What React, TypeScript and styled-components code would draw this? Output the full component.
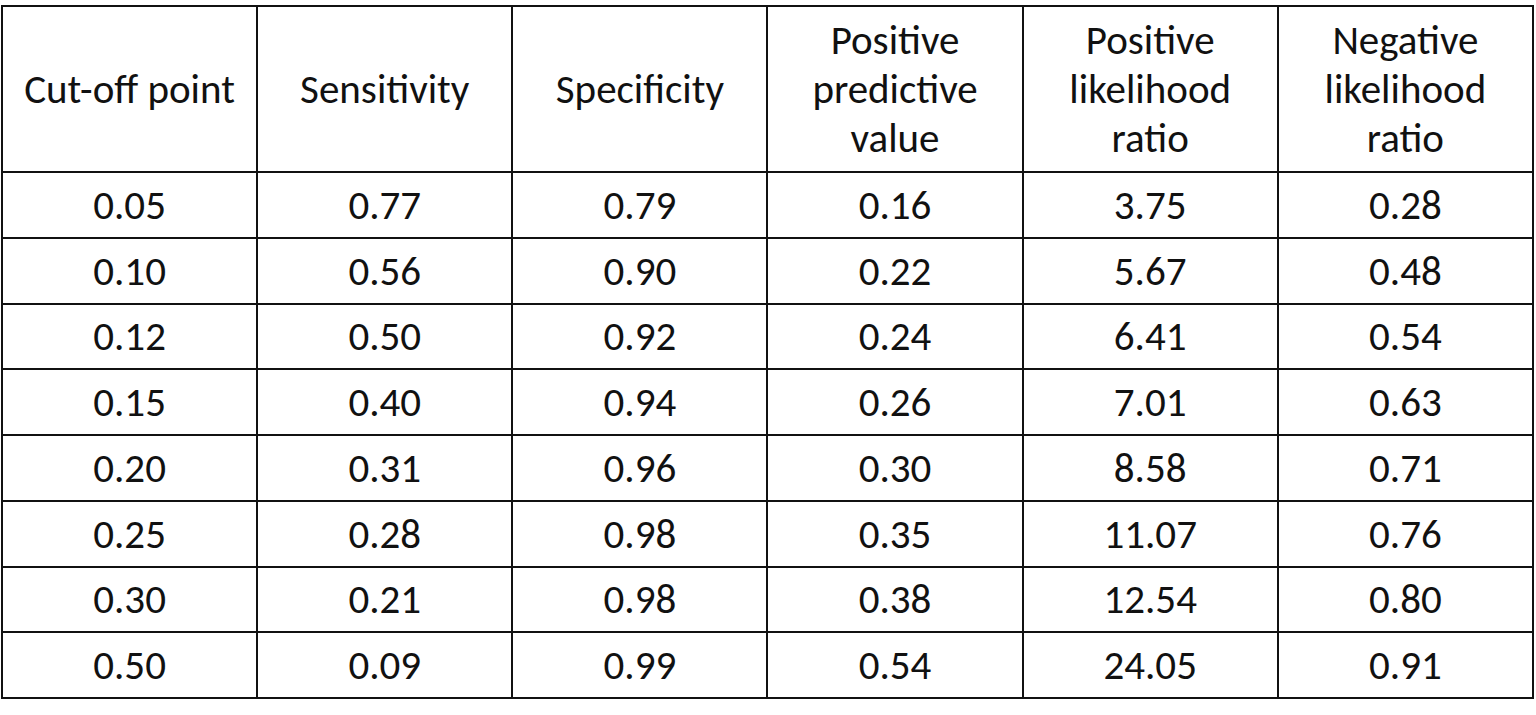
import * as React from 'react'
import styled, { createGlobalStyle } from 'styled-components'

type Row = [string, string, string, string, string, string]

const headers: string[][] = [
  ['Cut-off point'],
  ['Sensitivity'],
  ['Specificity'],
  ['Positive', 'predictive', 'value'],
  ['Positive', 'likelihood', 'ratio'],
  ['Negative', 'likelihood', 'ratio'],
]

const rows: Row[] = [
  ['0.05', '0.77', '0.79', '0.16', '3.75', '0.28'],
  ['0.10', '0.56', '0.90', '0.22', '5.67', '0.48'],
  ['0.12', '0.50', '0.92', '0.24', '6.41', '0.54'],
  ['0.15', '0.40', '0.94', '0.26', '7.01', '0.63'],
  ['0.20', '0.31', '0.96', '0.30', '8.58', '0.71'],
  ['0.25', '0.28', '0.98', '0.35', '11.07', '0.76'],
  ['0.30', '0.21', '0.98', '0.38', '12.54', '0.80'],
  ['0.50', '0.09', '0.99', '0.54', '24.05', '0.91'],
]

export default function App() {
  return (
    <>
      <GlobalStyle />
      <Page>
        <Table>
          <colgroup>
            {headers.map((_, i) => <col key={i} />)}
          </colgroup>
          <thead>
            <HeadRow>
              {headers.map((lines, i) => (
                <HeadCell key={i}>
                  {lines.map((l, j) => <HeadLine key={j}>{l}</HeadLine>)}
                </HeadCell>
              ))}
            </HeadRow>
          </thead>
          <tbody>
            {rows.map((r, i) => (
              <BodyRow key={i}>
                {r.map((v, j) => <Cell key={j}>{v}</Cell>)}
              </BodyRow>
            ))}
          </tbody>
        </Table>
      </Page>
    </>
  )
}

const GlobalStyle = createGlobalStyle`
  html, body {
    margin: 0;
    background: #ffffff;
  }
`

const Page = styled.div`
  padding: 5px 0 0 1px;
  font-family: Carlito, Lato, "Liberation Sans", sans-serif;
  color: #111;
`

const Table = styled.table`
  width: 1533px;
  border-collapse: collapse;
  table-layout: fixed;
  border: 2px solid #111;
`

const HeadRow = styled.tr`
  height: 166px;
`

const BodyRow = styled.tr`
  height: 65.75px;
`

const HeadCell = styled.th`
  border: 2px solid #111;
  padding: 0;
  font-weight: 400;
  font-size: 41px;
  line-height: 49px;
  text-align: center;
  vertical-align: middle;
`

const HeadLine = styled.div`
  white-space: nowrap;
`

const Cell = styled.td`
  border: 2px solid #111;
  padding: 0;
  font-size: 41px;
  line-height: 44px;
  text-align: center;
  vertical-align: middle;
`
